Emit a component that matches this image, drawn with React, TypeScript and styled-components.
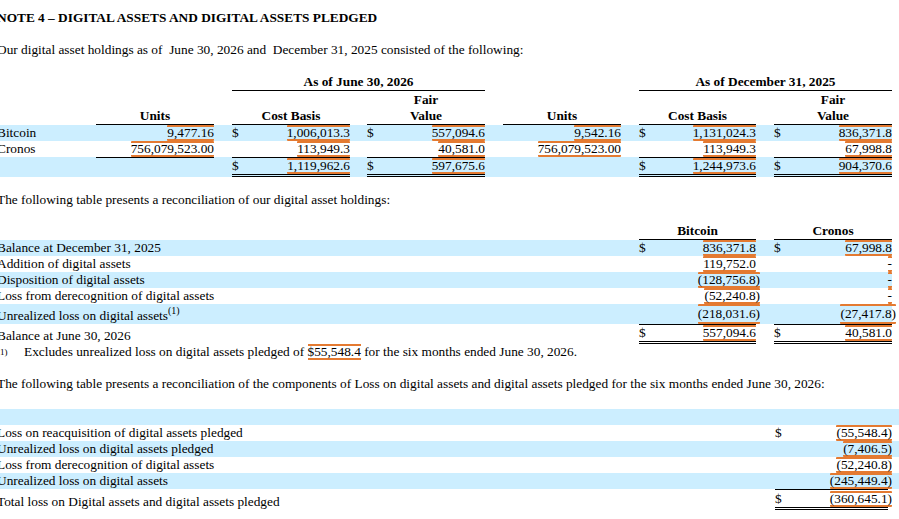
import React from 'react';
import styled, { createGlobalStyle } from 'styled-components';

const GlobalStyle = createGlobalStyle`
  html, body { margin: 0; padding: 0; background: #fff; }
  body {
    font-family: "Liberation Serif", "Times New Roman", serif;
    font-size: 13.33px;
    line-height: 16px;
    color: #000;
    overflow: hidden;
  }
`;

const shade = '#cceeff';
const orange = '#e47a31';

const Page = styled.div`
  margin-left: -3px;
  padding-top: 10px;
  width: 902px;
`;

const Heading = styled.div`
  font-weight: bold;
  height: 16px;
`;

const Para = styled.p<{ $top?: number }>`
  margin: ${p => p.$top ?? 16}px 0 0;
  height: 16px;
  white-space: nowrap;
`;

const FinTable = styled.table<{ $top?: number }>`
  margin-top: ${p => p.$top ?? 16}px;
  border-collapse: separate;
  border-spacing: 0;
  table-layout: fixed;
  font-size: 13.33px;
`;

const Row = styled.tr<{ $shade?: boolean }>`
  background: ${p => (p.$shade ? shade : 'transparent')};
`;

const Cell = styled.td<{ $h?: number }>`
  padding: 0;
  height: ${p => p.$h ?? 16}px;
  line-height: 16px;
  white-space: nowrap;
  vertical-align: bottom;
`;

const LabelCell = styled(Cell)`
  text-align: left;
`;

const HeadCell = styled(Cell)<{ $rule?: boolean }>`
  font-weight: bold;
  text-align: center;
  border-bottom: ${p => (p.$rule ? '1px solid #000' : 'none')};
`;

const MoneyCell = styled(Cell)<{ $over?: boolean; $double?: boolean }>`
  border-top: ${p => (p.$over ? '1px solid #000' : 'none')};
  border-bottom: ${p => (p.$double ? '3px double #000' : 'none')};
`;

const Amount = styled.div`
  display: flex;
  justify-content: space-between;
  align-items: stretch;
`;

const Dollar = styled.span`
  line-height: 16px;
`;

const Mark = styled.span<{ $hang?: boolean; $tall?: boolean }>`
  display: inline-block;
  margin-left: auto;
  line-height: ${p => (p.$tall ? 16 : 12)}px;
  border-top: 2px solid ${orange};
  border-bottom: 2px solid ${orange};
  border-radius: 1px;
  margin-right: ${p => (p.$hang ? -4 : 0)}px;
`;

const Sup = styled.sup`
  font-size: 10px;
  line-height: 0;
  vertical-align: 6px;
`;

const Footnote = styled.div`
  display: flex;
  height: 16px;
  white-space: nowrap;
`;

const NoteMark = styled.span`
  width: 24px;
  font-size: 9px;
  padding-left: 3px;
`;

const InlineMark = styled.span`
  border-top: 2px solid ${orange};
  border-bottom: 2px solid ${orange};
  line-height: 12px;
  display: inline-block;
`;

type MoneyProps = {
  value?: string;
  dollar?: boolean;
  over?: boolean;
  double?: boolean;
  tall?: boolean;
  h?: number;
};

const Money = ({ value, dollar, over, double, tall, h }: MoneyProps) => (
  <MoneyCell $over={over} $double={double} $h={h}>
    <Amount>
      <Dollar>{dollar ? '$' : ''}</Dollar>
      {value && (
        <Mark $hang={value.startsWith('(')} $tall={tall}>
          {value}
        </Mark>
      )}
    </Amount>
  </MoneyCell>
);

const Gap = () => <Cell />;

const holdings = [
  { name: 'Bitcoin', shade: true, dollar: true, u1: '9,477.16', c1: '1,006,013.3', f1: '557,094.6', u2: '9,542.16', c2: '1,131,024.3', f2: '836,371.8' },
  { name: 'Cronos', shade: false, dollar: false, u1: '756,079,523.00', c1: '113,949.3', f1: '40,581.0', u2: '756,079,523.00', c2: '113,949.3', f2: '67,998.8' },
];

const recon = [
  { name: 'Balance at December 31, 2025', shade: true, dollar: true, b: '836,371.8', c: '67,998.8' },
  { name: 'Addition of digital assets', shade: false, b: '119,752.0', c: '-' },
  { name: 'Disposition of digital assets', shade: true, b: '(128,756.8)', c: '-' },
  { name: 'Loss from derecognition of digital assets', shade: false, b: '(52,240.8)', c: '-' },
];

const losses = [
  { name: 'Loss on reacquisition of digital assets pledged', shade: false, dollar: true, v: '(55,548.4)' },
  { name: 'Unrealized loss on digital assets pledged', shade: true, v: '(7,406.5)' },
  { name: 'Loss from derecognition of digital assets', shade: false, v: '(52,240.8)' },
  { name: 'Unrealized loss on digital assets', shade: true, v: '(245,449.4)' },
];

const HoldingsTable = () => (
  <FinTable>
    <colgroup>
      {[99, 118, 18, 118, 17, 118, 18, 118, 18, 117, 18, 118].map((w, i) => (
        <col key={i} style={{ width: w }} />
      ))}
    </colgroup>
    <tbody>
      <tr>
        <LabelCell />
        <Cell />
        <Gap />
        <HeadCell colSpan={3} $rule>As of June 30, 2026</HeadCell>
        <Gap />
        <Cell />
        <Gap />
        <HeadCell colSpan={3} $rule>As of December 31, 2025</HeadCell>
      </tr>
      <tr>
        <LabelCell $h={33} />
        <HeadCell $rule $h={33}>Units</HeadCell>
        <Gap />
        <HeadCell $rule $h={33}>Cost Basis</HeadCell>
        <Gap />
        <HeadCell $rule $h={33}>Fair<br />Value</HeadCell>
        <Gap />
        <HeadCell $rule $h={33}>Units</HeadCell>
        <Gap />
        <HeadCell $rule $h={33}>Cost Basis</HeadCell>
        <Gap />
        <HeadCell $rule $h={33}>Fair<br />Value</HeadCell>
      </tr>
      {holdings.map(r => (
        <Row key={r.name} $shade={r.shade}>
          <LabelCell>{r.name}</LabelCell>
          <Money value={r.u1} />
          <Gap />
          <Money value={r.c1} dollar={r.dollar} />
          <Gap />
          <Money value={r.f1} dollar={r.dollar} />
          <Gap />
          <Money value={r.u2} />
          <Gap />
          <Money value={r.c2} dollar={r.dollar} />
          <Gap />
          <Money value={r.f2} dollar={r.dollar} />
        </Row>
      ))}
      <Row $shade>
        <LabelCell />
        <Money over />
        <Gap />
        <Money value="1,119,962.6" dollar over double />
        <Gap />
        <Money value="597,675.6" dollar over double />
        <Gap />
        <Money />
        <Gap />
        <Money value="1,244,973.6" dollar over double />
        <Gap />
        <Money value="904,370.6" dollar over double />
      </Row>
    </tbody>
  </FinTable>
);

const ReconTable = () => (
  <FinTable $top={15}>
    <colgroup>
      {[642, 117, 18, 118].map((w, i) => (
        <col key={i} style={{ width: w }} />
      ))}
    </colgroup>
    <tbody>
      <tr>
        <LabelCell />
        <HeadCell $rule>Bitcoin</HeadCell>
        <Gap />
        <HeadCell $rule>Cronos</HeadCell>
      </tr>
      {recon.map(r => (
        <Row key={r.name} $shade={r.shade}>
          <LabelCell>{r.name}</LabelCell>
          <Money value={r.b} dollar={r.dollar} />
          <Gap />
          <Money value={r.c} dollar={r.dollar} />
        </Row>
      ))}
      <Row $shade>
        <LabelCell $h={20}>
          Unrealized loss on digital assets<Sup>(1)</Sup>
        </LabelCell>
        <Money value="(218,031.6)" tall h={20} />
        <Gap />
        <Money value="(27,417.8)" tall h={20} />
      </Row>
      <Row>
        <LabelCell>Balance at June 30, 2026</LabelCell>
        <Money value="557,094.6" dollar over double />
        <Gap />
        <Money value="40,581.0" dollar over double />
      </Row>
    </tbody>
  </FinTable>
);

const LossTable = () => (
  <FinTable $top={17}>
    <colgroup>
      {[778, 113, 11].map((w, i) => (
        <col key={i} style={{ width: w }} />
      ))}
    </colgroup>
    <tbody>
      <Row $shade>
        <LabelCell />
        <Cell />
        <Cell />
      </Row>
      {losses.map(r => (
        <Row key={r.name} $shade={r.shade}>
          <LabelCell>{r.name}</LabelCell>
          <Money value={r.v} dollar={r.dollar} />
          <Cell />
        </Row>
      ))}
      <Row>
        <LabelCell $h={17}>Total loss on Digital assets and digital assets pledged</LabelCell>
        <Money value="(360,645.1)" dollar over double h={17} />
        <Cell />
      </Row>
    </tbody>
  </FinTable>
);

export default function App() {
  return (
    <>
      <GlobalStyle />
      <Page>
        <Heading>NOTE 4 – DIGITAL ASSETS AND DIGITAL ASSETS PLEDGED</Heading>
        <Para>
          Our digital asset holdings as of{'\u00a0'} June 30, 2026 and{'\u00a0'} December 31, 2025 consisted of the following:
        </Para>
        <HoldingsTable />
        <Para $top={15}>The following table presents a reconciliation of our digital asset holdings:</Para>
        <ReconTable />
        <Footnote>
          <NoteMark>1)</NoteMark>
          <span>
            Excludes unrealized loss on digital assets pledged of <InlineMark>$55,548.4</InlineMark> for the six months ended June 30, 2026.
          </span>
        </Footnote>
        <Para>
          The following table presents a reconciliation of the components of Loss on digital assets and digital assets pledged for the six months ended June 30, 2026:
        </Para>
        <LossTable />
      </Page>
    </>
  );
}
